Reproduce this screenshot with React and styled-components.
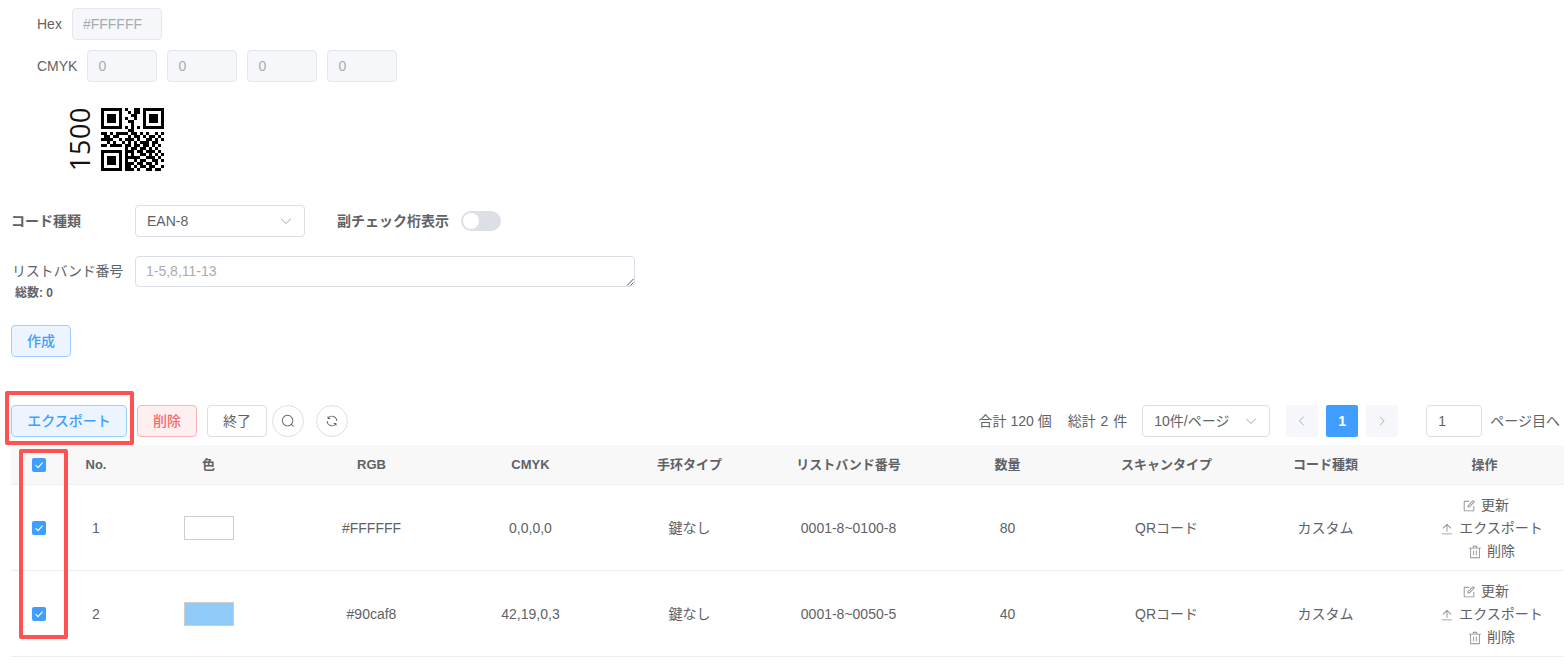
import React from "react";
import styled, { createGlobalStyle } from "styled-components";

const GlobalStyle = createGlobalStyle`
  html, body {
    margin: 0;
    padding: 0;
    background: #fff;
    overflow: hidden;
  }
  body {
    font-family: "Liberation Sans", "Noto Sans CJK JP", sans-serif;
    font-size: 14px;
    line-height: 20px;
    color: #606266;
  }
`;

const Page = styled.div`
  position: relative;
  width: 1568px;
  height: 668px;
  box-sizing: border-box;
  padding: 8px 4px 0 11px;
`;

const ColorRow = styled.div`
  display: flex;
  align-items: center;
  gap: 10px;
  height: 32px;
  margin-bottom: 10px;
  padding-left: 26px;
`;

const ColorLabel = styled.span`
  line-height: 32px;
`;

const ColorInput = styled.div`
  box-sizing: border-box;
  width: ${(p) => p.$width}px;
  height: 32px;
  padding: 0 10px;
  background: #f5f7fa;
  border: 1px solid #e4e7ed;
  border-radius: 4px;
  color: #a8abb2;
  line-height: 30px;
`;

const CodePreview = styled.div`
  display: flex;
  align-items: center;
  gap: 9px;
  height: 63px;
  margin: 26px 0 34px 56px;
`;

const CodeNumber = styled.span`
  writing-mode: vertical-rl;
  transform: rotate(180deg);
  font-family: "Open Sans", sans-serif;
  font-size: 27px;
  line-height: 25px;
  letter-spacing: 0.6px;
  color: #111;
`;

const FormRow = styled.div`
  display: flex;
  align-items: ${(p) => (p.$top ? "flex-start" : "center")};
  margin-bottom: ${(p) => p.$gap || 0}px;
`;

const FieldLabel = styled.label`
  width: 124px;
  flex: none;
  font-weight: 700;
  color: #606266;
`;

const FieldColumn = styled.div`
  width: 124px;
  flex: none;
  padding-left: 1px;
  box-sizing: border-box;
`;

const PlainLabel = styled.div`
  line-height: 30px;
  letter-spacing: -0.2px;
`;

const CountNote = styled.div`
  padding-left: 3px;
  font-size: 12px;
  font-weight: 700;
  line-height: 14px;
`;

const SelectBox = styled.div`
  box-sizing: border-box;
  width: ${(p) => p.$width}px;
  height: 32px;
  padding: 0 11px;
  display: flex;
  align-items: center;
  justify-content: space-between;
  flex: none;
  border: 1px solid #dcdfe6;
  border-radius: 4px;
  background: #fff;
  svg {
    width: 14px;
    height: 14px;
    fill: #a8abb2;
  }
`;

const SwitchLabel = styled.span`
  margin-left: 32px;
  font-weight: 700;
`;

const SwitchTrack = styled.span`
  box-sizing: border-box;
  width: 40px;
  height: 20px;
  margin-left: 12px;
  padding: 2px;
  border-radius: 10px;
  background: #dcdfe6;
  display: flex;
`;

const SwitchThumb = styled.span`
  width: 16px;
  height: 16px;
  border-radius: 50%;
  background: #fff;
`;

const TextArea = styled.div`
  position: relative;
  box-sizing: border-box;
  width: 500px;
  height: 31px;
  padding: 0 10px;
  border: 1px solid #dcdfe6;
  border-radius: 4px;
  color: #a8abb2;
  line-height: 29px;
  svg {
    position: absolute;
    right: 0;
    bottom: 0;
    width: 8px;
    height: 8px;
  }
`;

const Button = styled.button`
  box-sizing: border-box;
  width: ${(p) => p.$width}px;
  height: 32px;
  padding: 0;
  flex: none;
  border-radius: 4px;
  font: inherit;
  font-weight: ${(p) => (p.$tone === "default" ? 400 : 500)};
  color: ${(p) => (p.$tone === "primary" ? "#409eff" : p.$tone === "danger" ? "#f56c6c" : "#606266")};
  background: ${(p) => (p.$tone === "primary" ? "#ecf5ff" : p.$tone === "danger" ? "#fef0f0" : "#fff")};
  border: 1px solid ${(p) => (p.$tone === "primary" ? "#a0cfff" : p.$tone === "danger" ? "#fab6b6" : "#dcdfe6")};
`;

const CreateButton = styled(Button)`
  display: block;
  margin: 25px 0 48px;
`;

const Toolbar = styled.div`
  display: flex;
  align-items: center;
  justify-content: space-between;
  height: 32px;
  margin-bottom: 8px;
  padding-right: 4px;
`;

const ToolGroup = styled.div`
  display: flex;
  align-items: center;
`;

const ToolButton = styled(Button)`
  margin-right: 10px;
`;

const CircleButton = styled.button`
  box-sizing: border-box;
  width: 32px;
  height: 32px;
  padding: 0;
  margin-left: ${(p) => p.$offset}px;
  display: flex;
  align-items: center;
  justify-content: center;
  border: 1px solid #dcdfe6;
  border-radius: 50%;
  background: #fff;
  svg {
    width: 14px;
    height: 14px;
    fill: #606266;
  }
`;

const PagerText = styled.span`
  margin-left: ${(p) => p.$offset || 0}px;
  word-spacing: ${(p) => p.$spread || 0}px;
  white-space: nowrap;
`;

const PagerSelect = styled(SelectBox)`
  margin-left: 15px;
`;

const PageButton = styled.button`
  box-sizing: border-box;
  width: 32px;
  height: 32px;
  padding: 0;
  margin-left: ${(p) => p.$offset}px;
  display: flex;
  align-items: center;
  justify-content: center;
  border: none;
  border-radius: 2px;
  background: ${(p) => (p.$active ? "#409eff" : "#f5f7fa")};
  color: #fff;
  font: inherit;
  font-weight: 700;
  svg {
    width: 12px;
    height: 12px;
    fill: #a8abb2;
  }
`;

const JumpInput = styled.div`
  box-sizing: border-box;
  width: 56px;
  height: 32px;
  margin: 0 8px 0 28px;
  padding: 0 11px;
  border: 1px solid #dcdfe6;
  border-radius: 4px;
  line-height: 30px;
`;

const COLUMNS = "56px 58px 167px repeat(8, 159px)";

const HeaderRow = styled.div`
  display: grid;
  grid-template-columns: ${COLUMNS};
  height: 40px;
  align-items: center;
  background: #f8f8f8;
  border-bottom: 1px solid #ebeef5;
  box-sizing: border-box;
  font-size: 13px;
  font-weight: 700;
  text-align: center;
  color: #606266;
`;

const DataRow = styled.div`
  display: grid;
  grid-template-columns: ${COLUMNS};
  height: 86px;
  align-items: center;
  border-bottom: 1px solid #ebeef5;
  box-sizing: border-box;
  text-align: center;
`;

const Cell = styled.div`
  display: flex;
  justify-content: center;
  align-items: center;
`;

const Check = styled.span`
  width: 14px;
  height: 14px;
  border-radius: 2px;
  background: #409eff;
  display: flex;
  align-items: center;
  justify-content: center;
  svg {
    width: 10px;
    height: 10px;
  }
`;

const Swatch = styled.span`
  box-sizing: border-box;
  width: 50px;
  height: 24px;
  border: 1px solid #ccc;
  background: ${(p) => p.$color};
`;

const Actions = styled.div`
  display: flex;
  flex-direction: column;
  align-items: center;
  line-height: 23px;
  padding: 2px 0 0 14px;
`;

const ActionLink = styled.span`
  display: flex;
  align-items: center;
  gap: 5px;
  white-space: nowrap;
  margin-right: ${(p) => p.$pull || 0}px;
  svg {
    width: 14px;
    height: 14px;
    fill: #8a8d93;
  }
`;

const Highlight = styled.div`
  position: absolute;
  box-sizing: border-box;
  left: ${(p) => p.$left}px;
  top: ${(p) => p.$top}px;
  width: ${(p) => p.$width}px;
  height: ${(p) => p.$height}px;
  border: 4px solid #ff5353;
  border-radius: 2px;
  pointer-events: none;
`;

const Icon = ({ d }) => (
  <svg viewBox="0 0 1024 1024" xmlns="http://www.w3.org/2000/svg">
    {[].concat(d).map((path, i) => (
      <path key={i} d={path} />
    ))}
  </svg>
);

const ICONS = {
  down: "M831.872 340.864 512 652.672 192.128 340.864a30.592 30.592 0 0 0-42.752 0 29.12 29.12 0 0 0 0 41.6L489.664 714.24a32 32 0 0 0 44.672 0l340.288-331.712a29.12 29.12 0 0 0 0-41.728 30.592 30.592 0 0 0-42.752 0z",
  left: "M609.408 149.376 277.76 489.6a32 32 0 0 0 0 44.672l331.648 340.352a29.12 29.12 0 0 0 41.728 0 30.592 30.592 0 0 0 0-42.752L339.264 511.936l311.872-319.872a30.592 30.592 0 0 0 0-42.688 29.12 29.12 0 0 0-41.728 0z",
  right: "M340.864 149.312a30.592 30.592 0 0 0 0 42.752L652.736 512 340.864 831.872a30.592 30.592 0 0 0 0 42.752 29.12 29.12 0 0 0 41.728 0L714.24 534.336a32 32 0 0 0 0-44.672L382.592 149.376a29.12 29.12 0 0 0-41.728 0z",
  search: "m795.904 750.72 124.992 124.928a32 32 0 0 1-45.248 45.248L750.656 795.904a416 416 0 1 1 45.248-45.248zM480 832a352 352 0 1 0 0-704 352 352 0 0 0 0 704",
  refresh: "M771.776 794.88A384 384 0 0 1 128 512h64a320 320 0 0 0 555.712 216.448H654.72a32 32 0 1 1 0-64h149.056a32 32 0 0 1 32 32v148.928a32 32 0 1 1-64 0v-50.56zM276.288 295.616h92.992a32 32 0 0 1 0 64H220.16a32 32 0 0 1-32-32V178.56a32 32 0 0 1 64 0v50.56A384 384 0 0 1 896.128 512h-64a320 320 0 0 0-555.776-216.384z",
  edit: [
    "M832 512a32 32 0 1 1 64 0v352a32 32 0 0 1-32 32H160a32 32 0 0 1-32-32V160a32 32 0 0 1 32-32h352a32 32 0 0 1 0 64H192v640h640z",
    "m469.952 554.24 52.8-7.552L847.104 222.4a32 32 0 1 0-45.248-45.248L477.44 501.44l-7.552 52.8zm422.4-422.4a96 96 0 0 1 0 135.808l-331.84 331.84a32 32 0 0 1-18.112 9.088L436.8 623.68a32 32 0 0 1-36.224-36.224l15.104-105.6a32 32 0 0 1 9.024-18.112l331.904-331.84a96 96 0 0 1 135.744 0z",
  ],
  upload: "M160 832h704a32 32 0 1 1 0 64H160a32 32 0 1 1 0-64m384-578.304V704h-64V247.296L237.248 490.048 192 444.8 508.8 128l316.8 316.8-45.312 45.248z",
  trash: "M160 256H96a32 32 0 0 1 0-64h256V95.936a32 32 0 0 1 32-32h256a32 32 0 0 1 32 32V192h256a32 32 0 1 1 0 64h-64v672a32 32 0 0 1-32 32H192a32 32 0 0 1-32-32zm448-64v-64H416v64zM224 896h576V256H224zm192-128a32 32 0 0 1-32-32V416a32 32 0 0 1 64 0v320a32 32 0 0 1-32 32m192 0a32 32 0 0 1-32-32V416a32 32 0 0 1 64 0v320a32 32 0 0 1-32 32",
};

const QR_ROWS = [
  "111111101001101111111",
  "100000100101101000001",
  "101110100011001011101",
  "101110101001001011101",
  "101110100110001011101",
  "100000100010001000001",
  "111111101010101111111",
  "000000000110000000000",
  "110101111011010100101",
  "011011000101101011010",
  "111100101110100110101",
  "001010010101011101100",
  "110111101101101101010",
  "000000001011011010100",
  "111111101110110111010",
  "100000101010011010101",
  "101110101111100111010",
  "101110101001011001101",
  "101110101110110110100",
  "100000101101011011001",
  "111111101110100110110",
];

const QrCode = () => (
  <svg width="63" height="63" viewBox="0 0 21 21" shapeRendering="crispEdges" xmlns="http://www.w3.org/2000/svg">
    {QR_ROWS.flatMap((row, y) =>
      row.split("").map((bit, x) => (bit === "1" ? <rect key={`${x}-${y}`} x={x} y={y} width="1" height="1" fill="#000" /> : null))
    )}
  </svg>
);

const CheckBox = () => (
  <Check>
    <svg viewBox="0 0 10 10" xmlns="http://www.w3.org/2000/svg">
      <path d="M1.5 5.2 4 7.6 8.6 2.6" fill="none" stroke="#fff" strokeWidth="1.1" />
    </svg>
  </Check>
);

const HEADERS = ["No.", "色", "RGB", "CMYK", "手环タイプ", "リストバンド番号", "数量", "スキャンタイプ", "コード種類", "操作"];

const ROWS = [
  { no: 1, color: "#ffffff", rgb: "#FFFFFF", cmyk: "0,0,0,0", band: "0001-8~0100-8", qty: 80 },
  { no: 2, color: "#90caf8", rgb: "#90caf8", cmyk: "42,19,0,3", band: "0001-8~0050-5", qty: 40 },
];

export default function App() {
  return (
    <Page>
      <GlobalStyle />
      <ColorRow>
        <ColorLabel>Hex</ColorLabel>
        <ColorInput $width={90}>#FFFFFF</ColorInput>
      </ColorRow>
      <ColorRow>
        <ColorLabel>CMYK</ColorLabel>
        {[0, 1, 2, 3].map((i) => (
          <ColorInput key={i} $width={70}>0</ColorInput>
        ))}
      </ColorRow>
      <CodePreview>
        <CodeNumber>1500</CodeNumber>
        <QrCode />
      </CodePreview>

      <FormRow $gap={19}>
        <FieldLabel>コード種類</FieldLabel>
        <SelectBox $width={170}>
          EAN-8
          <Icon d={ICONS.down} />
        </SelectBox>
        <SwitchLabel>副チェック桁表示</SwitchLabel>
        <SwitchTrack>
          <SwitchThumb />
        </SwitchTrack>
      </FormRow>
      <FormRow $top>
        <FieldColumn>
          <PlainLabel>リストバンド番号</PlainLabel>
          <CountNote>総数: 0</CountNote>
        </FieldColumn>
        <TextArea>
          1-5,8,11-13
          <svg viewBox="0 0 8 8" xmlns="http://www.w3.org/2000/svg">
            <path d="M7.5 1 1 7.5M7.5 4.5 4.5 7.5" stroke="#555" strokeWidth="1" fill="none" />
          </svg>
        </TextArea>
      </FormRow>
      <CreateButton $width={60} $tone="primary">作成</CreateButton>

      <Toolbar>
        <ToolGroup>
          <ToolButton $width={116} $tone="primary">エクスポート</ToolButton>
          <ToolButton $width={60} $tone="danger">削除</ToolButton>
          <Button $width={60} $tone="default">終了</Button>
          <CircleButton $offset={5}><Icon d={ICONS.search} /></CircleButton>
          <CircleButton $offset={12}><Icon d={ICONS.refresh} /></CircleButton>
        </ToolGroup>
        <ToolGroup>
          <PagerText>合計 120 個</PagerText>
          <PagerText $offset={16} $spread={1}>総計 2 件</PagerText>
          <PagerSelect $width={128}>
            10件/ページ
            <Icon d={ICONS.down} />
          </PagerSelect>
          <PageButton $offset={16}><Icon d={ICONS.left} /></PageButton>
          <PageButton $offset={8} $active>1</PageButton>
          <PageButton $offset={8}><Icon d={ICONS.right} /></PageButton>
          <JumpInput>1</JumpInput>
          <PagerText>ページ目へ</PagerText>
        </ToolGroup>
      </Toolbar>

      <HeaderRow>
        <Cell><CheckBox /></Cell>
        {HEADERS.map((h) => (
          <Cell key={h}>{h}</Cell>
        ))}
      </HeaderRow>
      {ROWS.map((row) => (
        <DataRow key={row.no}>
          <Cell><CheckBox /></Cell>
          <Cell>{row.no}</Cell>
          <Cell><Swatch $color={row.color} /></Cell>
          <Cell>{row.rgb}</Cell>
          <Cell>{row.cmyk}</Cell>
          <Cell>鍵なし</Cell>
          <Cell>{row.band}</Cell>
          <Cell>{row.qty}</Cell>
          <Cell>QRコード</Cell>
          <Cell>カスタム</Cell>
          <Cell>
            <Actions>
              <ActionLink $pull={12}><Icon d={ICONS.edit} />更新</ActionLink>
              <ActionLink><Icon d={ICONS.upload} />エクスポート</ActionLink>
              <ActionLink><Icon d={ICONS.trash} />削除</ActionLink>
            </Actions>
          </Cell>
        </DataRow>
      ))}

      <Highlight $left={5} $top={391} $width={129} $height={54} />
      <Highlight $left={19} $top={449} $width={49} $height={190} />
    </Page>
  );
}
